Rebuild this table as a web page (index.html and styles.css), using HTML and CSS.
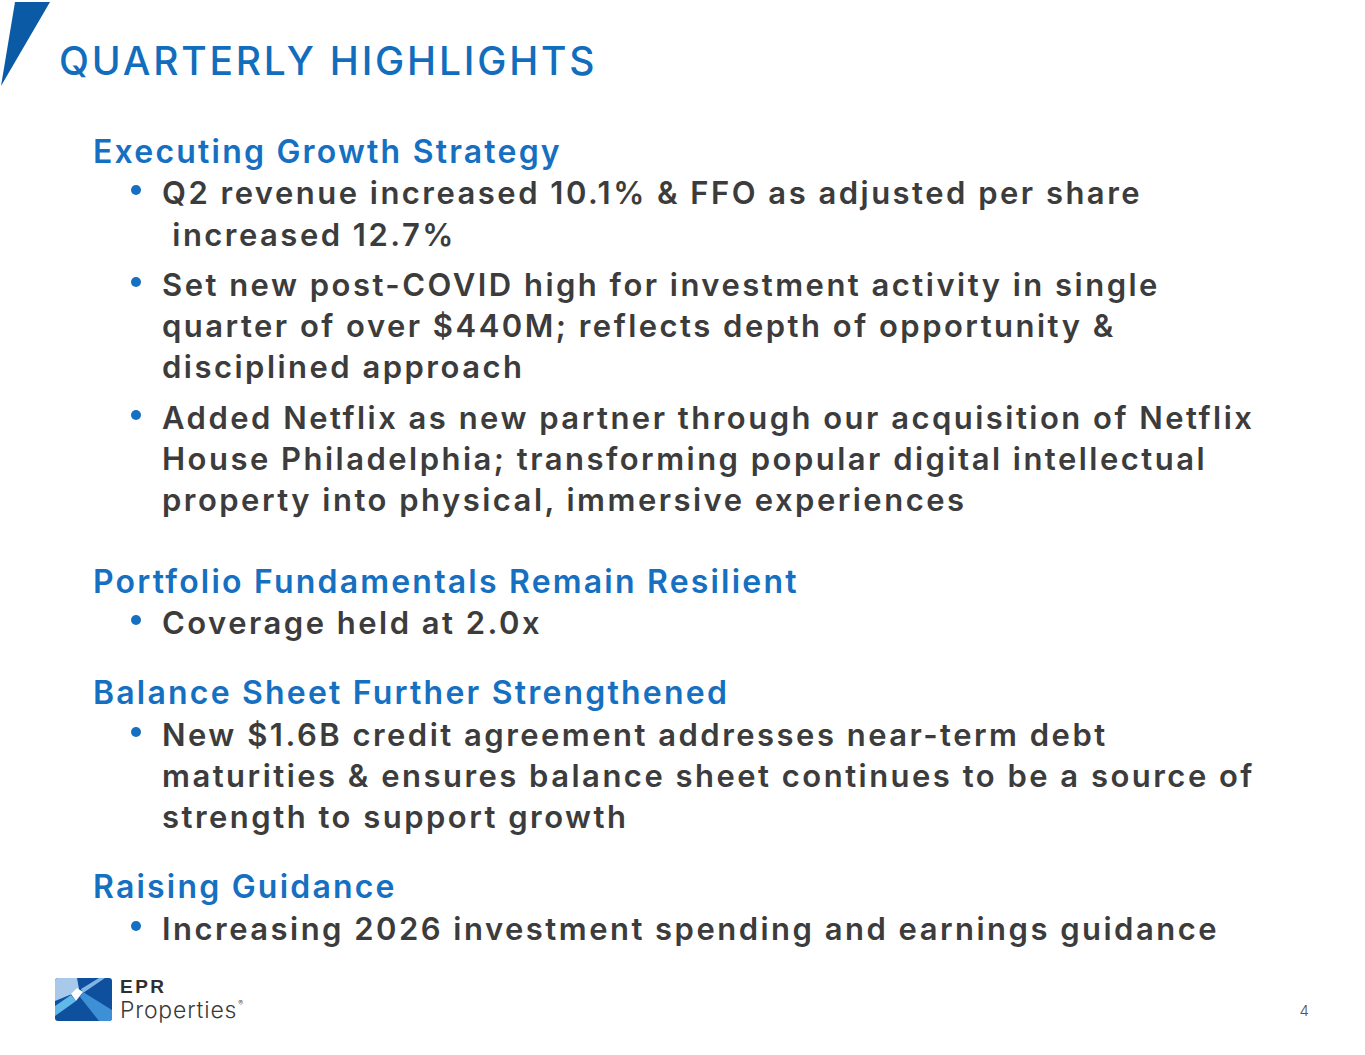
FILE: index.html
```html
<!DOCTYPE html>
<html lang="en">
<head>
<meta charset="utf-8">
<title>Quarterly Highlights</title>
<link rel="stylesheet" href="styles.css">
</head>
<body>
<div class="slide">
  <header class="slide-head">
    <svg class="corner" width="52" height="88" viewBox="0 0 52 88" aria-hidden="true">
      <polygon points="15,2 50,2 1,86" fill="#0b5aa6"/>
    </svg>
    <h1 class="title">QUARTERLY HIGHLIGHTS</h1>
  </header>

  <main class="content">
    <section class="group group--spaced">
      <h2 class="group-title">Executing Growth Strategy</h2>
      <ul class="bullets">
        <li><span class="dot"></span><span class="text">Q2 revenue increased 10.1% &amp; FFO as adjusted per share<br>&nbsp;increased 12.7%</span></li>
        <li><span class="dot"></span><span class="text">Set new post-COVID high for investment activity in single quarter of over $440M; reflects depth of opportunity &amp; disciplined approach</span></li>
        <li><span class="dot"></span><span class="text">Added Netflix as new partner through our acquisition of Netflix House Philadelphia; transforming popular digital intellectual property into physical, immersive experiences</span></li>
      </ul>
    </section>

    <section class="group">
      <h2 class="group-title">Portfolio Fundamentals Remain Resilient</h2>
      <ul class="bullets">
        <li><span class="dot"></span><span class="text">Coverage held at 2.0x</span></li>
      </ul>
    </section>

    <section class="group">
      <h2 class="group-title">Balance Sheet Further Strengthened</h2>
      <ul class="bullets">
        <li><span class="dot"></span><span class="text">New $1.6B credit agreement addresses near-term debt maturities &amp; ensures balance sheet continues to be a source of strength to support growth</span></li>
      </ul>
    </section>

    <section class="group">
      <h2 class="group-title">Raising Guidance</h2>
      <ul class="bullets">
        <li><span class="dot"></span><span class="text">Increasing 2026 investment spending and earnings guidance</span></li>
      </ul>
    </section>
  </main>

  <footer class="slide-foot">
    <div class="logo">
      <svg class="logo-mark" width="57" height="43" viewBox="0 0 57 43" aria-hidden="true">
        <defs>
          <clipPath id="lm"><rect x="0" y="0" width="57" height="43" rx="3"/></clipPath>
        </defs>
        <g clip-path="url(#lm)">
          <rect x="0" y="0" width="57" height="43" fill="#0e4f9e"/>
          <polygon points="0,0 22,0 24,11 17,16 0,23" fill="#a9c9ea"/>
          <polygon points="26,11 44,0 50,0 28,15" fill="#7fb6e3"/>
          <polygon points="25,19 28,14 57,32 57,43 44,43" fill="#3d8fd6"/>
          <polygon points="16,17 21,23 0,38 0,28" fill="#5fb8e8"/>
          <polygon points="16,16 22,10 28,14 21,23" fill="#ffffff"/>
        </g>
      </svg>
      <div class="logo-text">
        <span class="logo-epr">EPR</span>
        <span class="logo-props">Properties<sup class="reg">®</sup></span>
      </div>
    </div>
    <div class="page-num">4</div>
  </footer>
</div>
</body>
</html>
```
FILE: styles.css
```css
html, body {
  margin: 0;
  padding: 0;
  background: #ffffff;
}

.slide {
  width: 1365px;
  height: 1055px;
  display: flex;
  flex-direction: column;
  font-family: Inter, "Liberation Sans", sans-serif;
  color: #3c3c3c;
  overflow: hidden;
}

/* Header */
.slide-head {
  display: flex;
  align-items: flex-start;
}

.corner {
  flex: none;
  display: block;
}

.title {
  margin: 0 0 0 7px;
  padding-top: 41px;
  font-size: 39px;
  line-height: 39px;
  font-weight: 500;
  letter-spacing: 2.8px;
  color: #126dbd;
}

/* Content */
.content {
  margin-top: 43px;
  padding-left: 93px;
  padding-right: 93px;
}

.group + .group {
  margin-top: 29px;
}

.group--spaced {
  margin-bottom: 40px;
}

.group-title {
  margin: 0;
  font-size: 32px;
  line-height: 41.3px;
  font-weight: 600;
  letter-spacing: 2.2px;
  color: #1670c1;
}

.bullets {
  list-style: none;
  margin: 0;
  padding: 0 0 0 38px;
}

.bullets li {
  display: flex;
  align-items: flex-start;
  font-size: 31px;
  line-height: 41.3px;
  font-weight: 600;
  letter-spacing: 2.48px;
}

.bullets li + li {
  margin-top: 9px;
}

.dot {
  flex: none;
  width: 10px;
  height: 10px;
  margin-top: 13px;
  margin-right: 21px;
  border-radius: 50%;
  background: #1670c1;
}

.text {
  flex: 1;
  min-width: 0;
}

/* Footer */
.slide-foot {
  margin-top: auto;
  display: flex;
  justify-content: space-between;
  align-items: flex-end;
  padding: 0 56px 34px 55px;
}

.logo {
  display: flex;
  align-items: flex-end;
  gap: 8px;
}

.logo-mark {
  display: block;
}

.logo-text {
  display: flex;
  flex-direction: column;
  color: #3a3a3a;
  margin-bottom: -1px;
}

.logo-epr {
  font-family: "Liberation Sans", Arial, sans-serif;
  font-size: 19px;
  line-height: 18px;
  font-weight: 700;
  letter-spacing: 2.5px;
  color: #2f2f2f;
  margin-bottom: 2px;
}

.logo-props {
  font-size: 23px;
  line-height: 24px;
  font-weight: 300;
  letter-spacing: 0.8px;
}

.reg {
  font-size: 7px;
  vertical-align: 12px;
  line-height: 0;
  margin-left: 1px;
}

.page-num {
  font-size: 15px;
  line-height: 15px;
  font-weight: 300;
  color: #555555;
  margin-bottom: 3px;
}
```
